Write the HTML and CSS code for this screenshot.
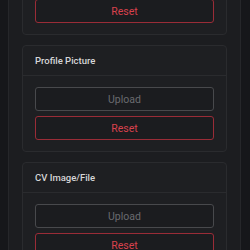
FILE: index.html
```html
<!DOCTYPE html>
<html lang="en">
<head>
    <meta charset="UTF-8">
    <meta name="viewport" content="width=device-width, initial-scale=1.0">
    <title>Media</title>
    <link rel="stylesheet" href="styles.css">
</head>
<body>
    <div class="panel">
        <div class="card card-top">
            <div class="card-body">
                <button class="btn btn-reset">Reset</button>
            </div>
        </div>
        <div class="card">
            <div class="card-header">Profile Picture</div>
            <div class="card-body">
                <button class="btn btn-upload">Upload</button>
                <button class="btn btn-reset">Reset</button>
            </div>
        </div>
        <div class="card">
            <div class="card-header">CV Image/File</div>
            <div class="card-body">
                <button class="btn btn-upload">Upload</button>
                <button class="btn btn-reset">Reset</button>
            </div>
        </div>
    </div>
</body>
</html>
```

FILE: styles.css
```css
body {
    font-family: Roboto, "Liberation Sans", sans-serif;
    background-color: #16171a;
    margin: 0;
    height: 250px;
    overflow: hidden;
}
.panel {
    width: 205px;
    margin-left: 8px;
    padding: 0 13px;
    height: 250px;
    background: #1c1d20;
    border-left: 1px solid #26272a;
    border-right: 1px solid #26272a;
    display: flex;
    flex-direction: column;
    gap: 10px;
}
.card {
    background: #1e1f22;
    border: 1px solid #2a2b2e;
    border-radius: 4px;
    flex-shrink: 0;
}
.card-top {
    margin-top: -13px;
}
.card-header {
    height: 29px;
    line-height: 30px;
    padding: 0 12px;
    font-size: 9.5px;
    font-weight: 500;
    color: #d6d6d8;
    border-bottom: 1px solid #2a2b2e;
}
.card-body {
    padding: 11px 12px;
    display: flex;
    flex-direction: column;
    gap: 5px;
}
.btn {
    height: 24px;
    font-family: inherit;
    font-size: 10.5px;
    background: #1b1c1f;
    border-radius: 3px;
    padding: 0;
}
.btn-upload {
    color: #6a6b6f;
    border: 1px solid #48494c;
}
.btn-reset {
    color: #d8414d;
    border: 1px solid #9a2c37;
}
```
